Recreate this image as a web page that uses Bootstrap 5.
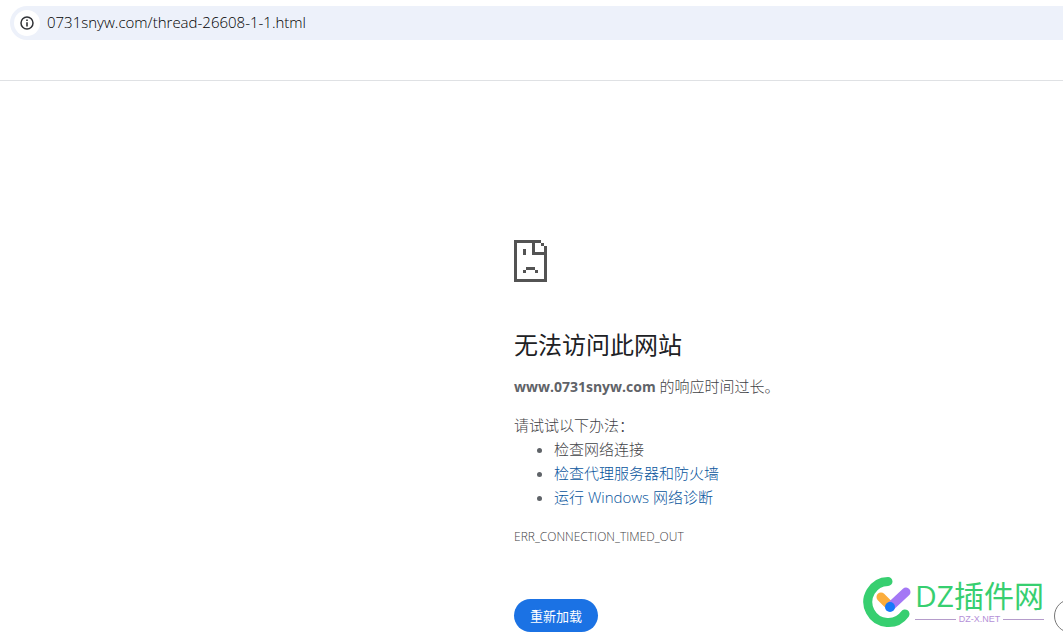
<!DOCTYPE html>
<html lang="zh-CN">
<head>
<meta charset="utf-8">
<meta name="viewport" content="width=device-width, initial-scale=1">
<title>0731snyw.com</title>
<link href="https://cdn.jsdelivr.net/npm/bootstrap@5.3.0/dist/css/bootstrap.min.css" rel="stylesheet">
<style>
  body { font-family: "Open Sans", "Noto Sans CJK SC", sans-serif; font-size: 15px; font-weight: 300; line-height: 24px; color: #3f4246; background: #fff; overflow-x: hidden; }
  .toolbar { height: 81px; padding: 6px 0 0 10px; border-bottom: 1px solid #dfe1e4; }
  .omnibox { height: 34px; padding-left: 4px; gap: 7px; background: #edf1fa; border-radius: 17px 0 0 17px; }
  .site-info { width: 26px; height: 26px; }
  .address { height: 34px; padding: 0 0 2px; font-size: 15px; font-weight: 300; color: #000; outline: 0; }
  .error-page { margin-left: 514px; padding-top: 159px; max-width: 600px; }
  .error-page h1 { font-size: 24px; line-height: 30px; color: #202124; margin: 48px 0 14px; font-weight: 400; }
  .error-page p { margin-bottom: 14px; }
  .error-page strong { font-size: 14px; font-weight: 700; color: #5f6368; }
  .error-page ul { padding-left: 40px; margin-bottom: 16px; }
  .error-page li::marker { color: #5f6368; }
  .error-page a { color: #07549c; }
  .error-code { font-size: 12px; }
  .reload { margin-top: 50px; height: 33px; width: 84px; font-size: 13px; line-height: 20px; background: #1b72e4; color: #fff; }
  .reload:hover { background: #185abc; color: #fff; }
  .watermark { right: 19px; bottom: 14px; gap: 2px; }
  .brand-name { font-size: 30px; font-weight: 400; line-height: 36px; color: #37cf70; white-space: nowrap; }
  .brand-site { font-family: "Liberation Sans", sans-serif; font-size: 9px; line-height: 10px; color: #b490d8; gap: 3px; }
  .brand-site i { height: 1px; background: #b59ccb; }
  .edge-circle { right: -25px; bottom: 9px; width: 34px; height: 34px; border: 1px solid #777; }
</style>
</head>
<body class="min-vh-100 position-relative">
<header class="toolbar">
  <div class="omnibox d-flex align-items-center">
    <button class="site-info btn p-0 border-0 rounded-circle bg-white d-flex align-items-center justify-content-center" type="button" aria-label="查看网站信息">
      <svg width="14" height="14" viewBox="0 0 14 14"><circle cx="7" cy="7" r="6" fill="none" stroke="#303236" stroke-width="1.5"/><path d="M6.2 3.4h1.6V5H6.2zM6.2 6.2h1.6v4.4H6.2z" fill="#303236"/></svg>
    </button>
    <input class="address flex-grow-1 border-0 bg-transparent" type="text" value="0731snyw.com/thread-26608-1-1.html" aria-label="地址">
  </div>
</header>
<main class="error-page">
  <svg class="d-block" width="33" height="42" viewBox="0 0 11 14" fill="#535353" shape-rendering="crispEdges" aria-hidden="true">
    <path d="M0 0h9v1h1v1h1v12H0zM1 1v12h9V5H6V1zM7 1v3h3V2H9V1z" fill-rule="evenodd"/>
    <path d="M3 3h1v2H3zM4 9h3v1H4zM3 10h1v1H3zM7 10h1v1H7z"/>
  </svg>
  <h1>无法访问此网站</h1>
  <p><strong>www.0731snyw.com</strong> 的响应时间过长。</p>
  <p class="mb-0">请试试以下办法：</p>
  <ul>
    <li>检查网络连接</li>
    <li><a class="text-decoration-none" href="#proxy">检查代理服务器和防火墙</a></li>
    <li><a class="text-decoration-none" href="#diagnose">运行 Windows 网络诊断</a></li>
  </ul>
  <div class="error-code">ERR_CONNECTION_TIMED_OUT</div>
  <button class="reload btn rounded-pill border-0 p-0" type="button">重新加载</button>
</main>
<aside class="watermark position-absolute d-flex align-items-center">
  <svg width="50" height="54" viewBox="3 0 50 54" fill="none" stroke-linecap="round" aria-hidden="true">
    <path d="M28 7.500A20.500 20.500 0 1 0 45 40" stroke="#37cf70" stroke-width="9"/>
    <path d="M21 23L28 30" stroke="#fbad3c" stroke-width="9"/>
    <path d="M31 32L46 18" stroke="#a478f5" stroke-width="9"/>
    <circle cx="30" cy="33" r="5" fill="#1679fa"/>
  </svg>
  <div>
    <div class="brand-name">DZ插件网</div>
    <div class="brand-site d-flex align-items-center"><i class="flex-fill"></i><span>DZ-X.NET</span><i class="flex-fill"></i></div>
  </div>
</aside>
<div class="position-absolute top-0 bottom-0 start-0 end-0 overflow-hidden pe-none"><div class="edge-circle position-absolute rounded-circle"></div></div>
<script src="https://cdn.jsdelivr.net/npm/bootstrap@5.3.0/dist/js/bootstrap.bundle.min.js"></script>
</body>
</html>
